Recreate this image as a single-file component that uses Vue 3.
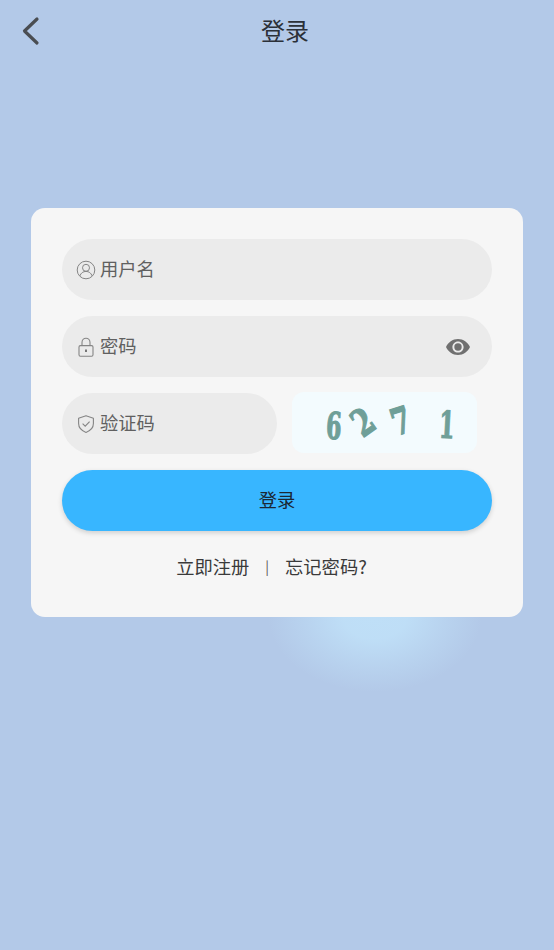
<script setup>
const digits = [
  { ch: '6', cls: 'd1' },
  { ch: '2', cls: 'd2' },
  { ch: '7', cls: 'd3' },
  { ch: '1', cls: 'd4' }
]
</script>

<template>
  <div class="page">
    <div class="glow"></div>
    <header class="nav">
      <svg class="back" width="20" height="30" viewBox="0 0 20 30" fill="none">
        <path d="M16 3 L3.5 15 L16 27" stroke="#4a4d52" stroke-width="3.2" stroke-linecap="round" stroke-linejoin="round" />
      </svg>
      <div class="title">登录</div>
    </header>

    <main class="card">
      <div class="field">
        <svg class="ico" width="20" height="20" viewBox="0 0 20 20" fill="none" stroke="#858585" stroke-width="1">
          <circle cx="10" cy="10" r="8.8" />
          <circle cx="10" cy="7.8" r="3.5" />
          <path d="M4 15.8 C4.8 13 7.2 11.4 10 11.4 C12.8 11.4 15.2 13 16 15.8" />
        </svg>
        <span class="ph">用户名</span>
      </div>

      <div class="field">
        <svg class="ico" width="20" height="20" viewBox="0 0 20 20" fill="none" stroke="#858585" stroke-width="1.1">
          <rect x="3" y="8.6" width="14" height="10.6" rx="1.4" />
          <path d="M6 8.6 V5.4 C6 3 7.8 1.2 10 1.2 C12.2 1.2 14 3 14 5.4 V8.6" />
          <path d="M10 12.6 V15" stroke-width="1.8" stroke="#6a6a6a" />
        </svg>
        <span class="ph">密码</span>
        <svg class="eye" width="26" height="18" viewBox="0 0 26 18">
          <path fill="#707070" fill-rule="evenodd" d="M13 1 C7.6 1 3.2 4.4 1 9 C3.2 13.6 7.6 17 13 17 C18.4 17 22.8 13.6 25 9 C22.8 4.4 18.4 1 13 1 Z M13 3.4 C16.1 3.4 18.6 5.9 18.6 9 C18.6 12.1 16.1 14.6 13 14.6 C9.9 14.6 7.4 12.1 7.4 9 C7.4 5.9 9.9 3.4 13 3.4 Z" />
          <circle cx="13" cy="9" r="3.7" fill="#707070" />
        </svg>
      </div>

      <div class="row">
        <div class="field code">
          <svg class="ico" width="20" height="20" viewBox="0 0 20 20" fill="none" stroke="#858585" stroke-width="1.1">
            <path d="M10 1.8 L17.4 4.2 V9.6 C17.4 13.8 14.4 16.8 10 18.4 C5.6 16.8 2.6 13.8 2.6 9.6 V4.2 Z" stroke-linejoin="round" />
            <path d="M6.6 9.6 L9.2 12.2 L13.6 7.6" />
          </svg>
          <span class="ph">验证码</span>
        </div>
        <div class="captcha">
          <span v-for="d in digits" :key="d.ch" class="digit" :class="d.cls">{{ d.ch }}</span>
        </div>
      </div>

      <button class="submit"><span class="submit-label">登录</span></button>

      <div class="links">
        <span>立即注册</span>
        <span class="sep">|</span>
        <span>忘记密码?</span>
      </div>
    </main>
  </div>
</template>

<style>
html, body { margin: 0; padding: 0; }
</style>

<style scoped>
.page {
  position: relative;
  width: 554px;
  height: 950px;
  overflow: hidden;
  background: #b3c9e8;
  font-family: "Noto Sans CJK SC", "Noto Sans", sans-serif;
}
.glow {
  position: absolute;
  left: 268px;
  top: 540px;
  width: 214px;
  height: 152px;
  background: radial-gradient(closest-side, #bfdff7 0%, rgba(191, 223, 247, 0.95) 30%, rgba(191, 223, 247, 0.45) 65%, rgba(191, 223, 247, 0) 100%);
}
.nav {
  position: relative;
  height: 62px;
  display: flex;
  align-items: center;
  justify-content: center;
}
.back {
  position: absolute;
  left: 21px;
  top: 16px;
}
.title {
  font-size: 24px;
  color: #2b3038;
  margin-left: 16px;
  padding-bottom: 4px;
}
.card {
  position: relative;
  box-sizing: border-box;
  width: 492px;
  height: 409px;
  margin: 146px 0 0 31px;
  padding: 31px 31px 0;
  background: #f6f6f6;
  border-radius: 14px;
  display: flex;
  flex-direction: column;
  gap: 16px;
  opacity: 0.999;
}
.field {
  box-sizing: border-box;
  height: 61px;
  background: #ebebeb;
  border-radius: 31px;
  display: flex;
  align-items: center;
  padding-left: 14px;
  flex: none;
}
.ico { flex: none; margin-right: 4px; }
.ph {
  font-size: 18.3px;
  color: #606060;
  padding-bottom: 4px;
}
.eye { margin-left: auto; margin-right: 21px; }
.row {
  display: flex;
  align-items: flex-start;
  gap: 15px;
}
.code { width: 215px; }
.captcha {
  position: relative;
  width: 185px;
  height: 61px;
  margin-top: -1px;
  background: #f3fbfe;
  border-radius: 12px;
  overflow: hidden;
}
.digit {
  position: absolute;
  width: 28px;
  height: 40px;
  line-height: 40px;
  text-align: center;
  font-family: "DejaVu Serif", serif;
  font-weight: 700;
  font-size: 37px;
  color: #6f9f98;
  -webkit-text-stroke: 1.2px #6f9f98;
}
.d1 { left: 28px; top: 14px; transform: rotate(3deg) scaleX(0.6); }
.d2 { left: 57px; top: 10px; transform: rotate(-35deg) scaleX(0.75); }
.d3 { left: 95px; top: 9px; transform: rotate(-18deg) scaleX(0.75); }
.d4 { left: 141px; top: 13px; transform: rotate(3deg) scaleX(0.6); }
.submit {
  box-sizing: border-box;
  height: 61px;
  border: 0;
  padding: 0;
  background: #38b6ff;
  border-radius: 31px;
  box-shadow: 0 2px 5px rgba(0, 0, 0, 0.16);
  font-family: inherit;
  font-size: 18.3px;
  color: #1b2733;
  flex: none;
  display: flex;
  align-items: center;
  justify-content: center;
}
.submit-label { padding-bottom: 4px; }
.links {
  margin-top: 6px;
  padding-right: 11px;
  display: flex;
  justify-content: center;
  align-items: center;
  font-size: 18.3px;
  color: #3a3a3a;
  line-height: 27px;
}
.sep {
  font-size: 14px;
  color: #555;
  margin: 0 16px;
}
</style>
